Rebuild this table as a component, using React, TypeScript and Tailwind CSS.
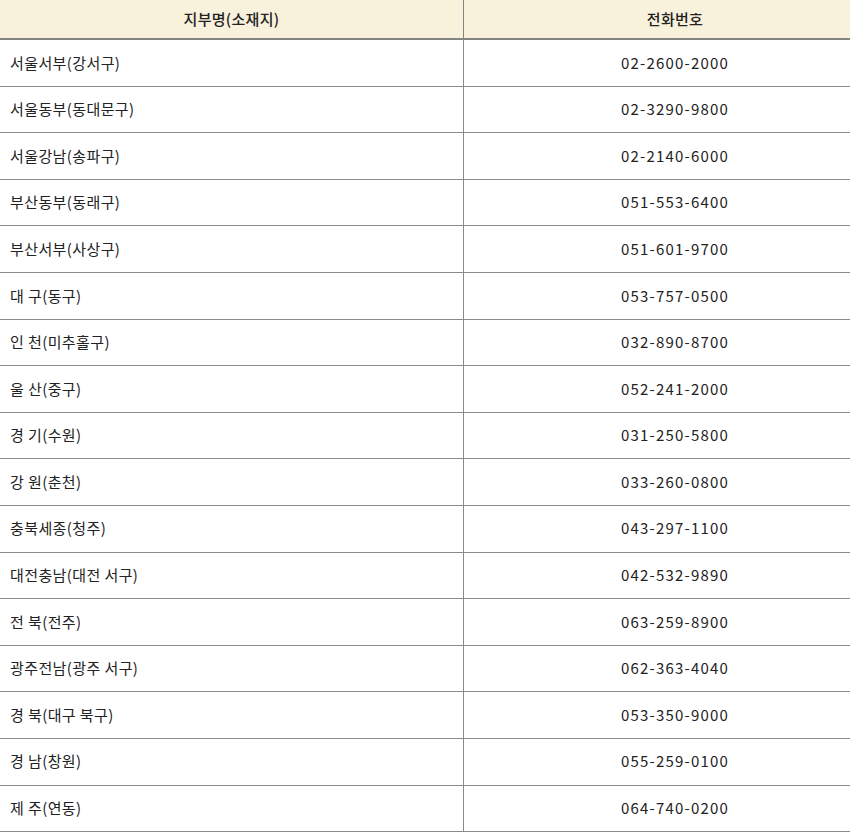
import React from "react";

const branches: [string, string][] = [
  ["서울서부(강서구)", "02-2600-2000"],
  ["서울동부(동대문구)", "02-3290-9800"],
  ["서울강남(송파구)", "02-2140-6000"],
  ["부산동부(동래구)", "051-553-6400"],
  ["부산서부(사상구)", "051-601-9700"],
  ["대 구(동구)", "053-757-0500"],
  ["인 천(미추홀구)", "032-890-8700"],
  ["울 산(중구)", "052-241-2000"],
  ["경 기(수원)", "031-250-5800"],
  ["강 원(춘천)", "033-260-0800"],
  ["충북세종(청주)", "043-297-1100"],
  ["대전충남(대전 서구)", "042-532-9890"],
  ["전 북(전주)", "063-259-8900"],
  ["광주전남(광주 서구)", "062-363-4040"],
  ["경 북(대구 북구)", "053-350-9000"],
  ["경 남(창원)", "055-259-0100"],
  ["제 주(연동)", "064-740-0200"],
];

export default function App() {
  return (
    <div className="w-[850px] h-[832px] overflow-hidden bg-white text-[15px] text-[#222] font-['Noto_Sans_CJK_KR','Noto_Sans',sans-serif]">
      {/* table is wider than the window, right edge gets cut off */}
      <div className="w-[886px]">
        <div className="flex h-[40px] bg-[#f8f1db] border-b-2 border-[#858585]">
          <div className="w-[464px] flex items-center justify-center border-r border-[#858585] font-medium tracking-[0.3px]">지부명(소재지)</div>
          <div className="flex-1 flex items-center justify-center font-medium tracking-[0.3px]">전화번호</div>
        </div>

        {branches.map(([name, tel]) => (
          <div key={name} className="flex h-[46.6px] border-b border-[#8a8a8a]">
            <div className="w-[464px] flex items-center pl-[10px] border-r border-[#8a8a8a] tracking-[0.4px]">{name}</div>
            <div className="flex-1 flex items-center justify-center tracking-[1.2px]">{tel}</div>
          </div>
        ))}
      </div>
    </div>
  );
}
